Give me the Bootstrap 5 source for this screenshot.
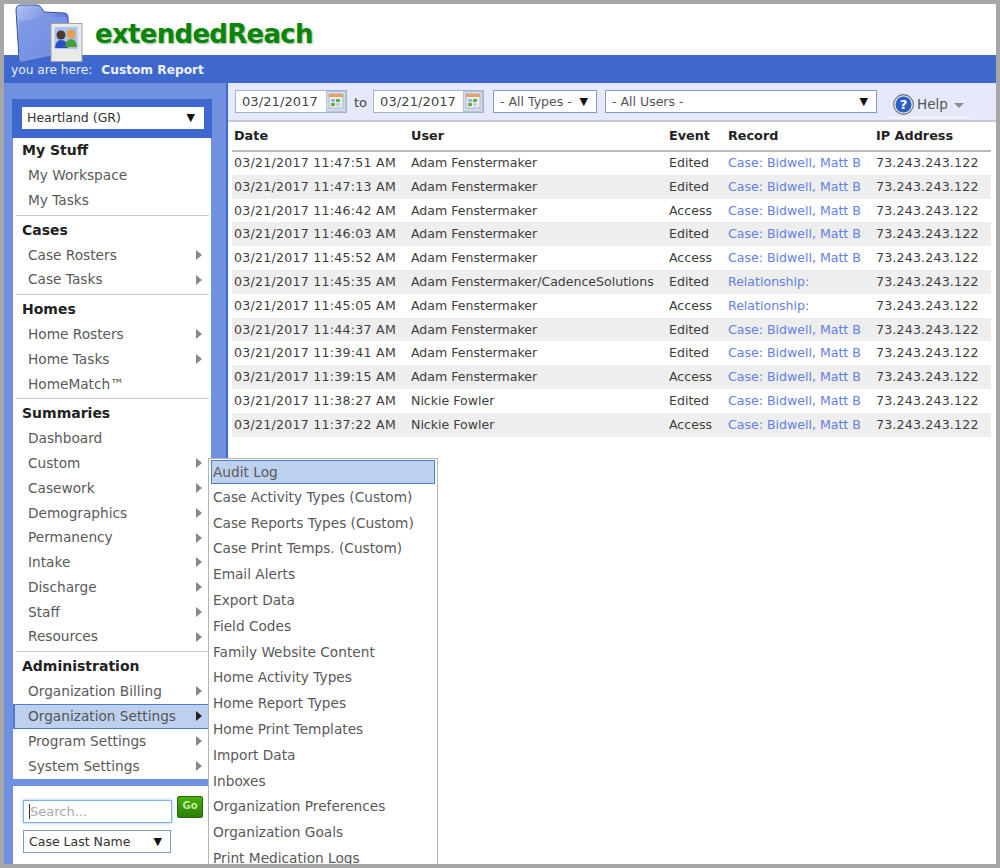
<!DOCTYPE html>
<html lang="en">
<head>
<meta charset="utf-8">
<title>extendedReach</title>
<link href="https://cdn.jsdelivr.net/npm/bootstrap@5.3.0/dist/css/bootstrap.min.css" rel="stylesheet">
<style>
html,body{height:868px;overflow:hidden;margin:0}
body{font-family:"DejaVu Sans","Liberation Sans",sans-serif;font-size:13px;color:#444;background:#fff}
.frame{position:relative;width:1000px;height:868px;border:4px solid #a6a6a6;overflow:hidden;background:#fff}
.top{height:51px;align-items:flex-start}
.logo-ic{position:absolute;left:10px;top:0;z-index:2}
.brand{margin:12px 0 0 91px;font-size:26px;line-height:36px;font-weight:700;color:#0a850a;text-shadow:1px 1px 2px rgba(20,100,20,.45);letter-spacing:-.7px}
.crumb{height:28px;background:#3e68cd;color:#e8eefc;padding-left:7px;line-height:31px;font-size:12.2px}
.crumb b{margin-left:5px;color:#eef3ff}
.shell{height:781px}
.side{width:222px;flex:none;background:#7091e0;padding:16px 0 0 8px}
.picker{width:200px;background:#3e68cd;height:39px;padding:8px 8px 0 10px}
.fakesel{background:#fff;border:1px solid #7f9dc0;display:flex;justify-content:space-between;align-items:center;color:#333;padding:1px 6px 0 5px}
.arrow{font-size:11px;color:#111}
.picker .fakesel{height:22px;border-color:#fff;font-size:12.5px;padding-left:4px;padding-right:8px}
.navbox{width:198px;margin-left:1px;background:#fff;padding:0 0 1px 0}
.navhd{font-weight:700;color:#222;font-size:14px;padding-left:9px;line-height:20px;height:25px;padding-top:2px}
.navit{display:flex;justify-content:space-between;align-items:center;height:24.75px;padding:0 9px 0 15px;color:#595959;font-size:13.7px}
.navit svg{flex:none}
.navit.on{background:#bdd0ee;border:1px solid #4f7dc9;border-left-width:2px;margin-right:-2px;padding-left:13px;padding-right:10px;color:#555;height:25px}
.rule{border-top:1px solid #c9c9c9;margin:2px 2px 2px 3px}
.band{width:200px;height:7px}
.searchbox{width:198px;margin-left:1px;background:#fff;height:78px;padding:14px 0 0 10px}
.srch{width:149px;height:23px;border:1px solid #7fb2e5;box-shadow:0 0 3px #8fbdf0;color:#aaa;padding:1px 0 0 5px;line-height:19px;font-size:13px}
.srch span{border-left:1px solid #333;padding-left:0}
.go{width:26px;height:22px;margin-left:5px;margin-top:-4px;background:linear-gradient(#46b20a,#2a7f06);border:1px solid #26660a;border-radius:2px;color:#c9e8a5;font-size:10px;font-weight:700;text-align:center;line-height:18px}
.searchbox .fakesel{width:148px;height:23px;margin-top:7px;font-size:12.5px;padding-right:8px}
.main{flex:1;border-left:2px solid #3e68cd;min-width:0}
.tools{height:39px;background:#e6e8fb;border-bottom:2px solid #c9c9d2;padding:7px 0 0 7px;font-size:13px}
.dt{width:112px;height:23px;background:#fff;border:1px solid #a3b4c8;display:flex;justify-content:space-between;align-items:center;padding:0 0 0 6px;color:#444;letter-spacing:.1px}
.to{margin:0 6px 0 7px;color:#444}
.dt2{width:111px}
.tp{width:104px;margin-left:9px;height:23px}
.us{width:272px;margin-left:8px;height:23px}
.tools .fakesel{border-color:#7f9dc0;font-size:12.5px;color:#555;padding:1px 8px 0 6px}
.help{margin-left:11px;width:82px;height:29px;border-bottom:1px solid #fff;font-size:13.5px;color:#555;gap:3px;margin-top:-1px;padding:3px 0 0 5px}
.caret-g{width:0;height:0;border:5px solid transparent;border-top-color:#8d8d8d;border-bottom:0;margin-left:3px;margin-top:2px}
.logtab{margin:0 0 0 4px;width:759px;border-collapse:collapse;font-size:12.55px;color:#3d3d3d;table-layout:fixed}
.logtab th{color:#222;font-weight:700;height:29px;border-bottom:2px solid #bbb;padding:0 0 0 2px;font-size:12.8px}
.logtab td{height:23.8px;padding:1px 0 0 2px;white-space:nowrap;overflow:visible}
.logtab td:first-child{letter-spacing:.27px}
.logtab td:last-child{letter-spacing:.2px}
.logtab tr.alt td{background:#eee}
.logtab a{color:#6380e2;text-decoration:none}
.fly{position:absolute;left:204px;top:454px;width:230px;height:420px;background:#fff;border:1px solid #b5b5b5;padding:1px 2px;font-size:13.7px;color:#595959}
.fly div{height:25.8px;line-height:25px;padding-left:2px;white-space:nowrap}
.fly div.sel{height:23.5px;line-height:22px;background:#bdd0ee;border:1px solid #4f7dc9;padding-left:1px;margin-bottom:1.4px}
</style>
</head>
<body>
<div class="frame">
  <div class="top d-flex">
    <svg class="logo-ic" width="72" height="60" viewBox="0 0 72 60">
      <defs><linearGradient id="f" x1="0" y1="0" x2="1" y2="1"><stop offset="0" stop-color="#b5c6f2"/><stop offset=".6" stop-color="#5a78d6"/><stop offset="1" stop-color="#3550b0"/></linearGradient></defs>
      <path d="M2 6 Q2 1 7 1 L23 1 Q26 1 28 5 L30 8 L50 9 Q54 9 54 14 L55 48 L8 58 Q5 58 5 54 Z" fill="url(#f)" stroke="#34509f"/>
      <path d="M5 17 Q18 16 28 12 L53 13 L55 48 L8 58 Q5 58 5 54 Z" fill="#7d97e6" opacity=".85"/>
      <rect x="37" y="19.5" width="31" height="38" fill="#e9e9e9" stroke="#a3a3a3"/>
      <rect x="40.5" y="23" width="23" height="22" fill="#a9c3ee"/>
      <circle cx="47" cy="31" r="4.5" fill="#4b3a2c"/><path d="M41 44 Q42 36 47 36 Q53 36 54 44Z" fill="#2c4fc0"/>
      <circle cx="57" cy="30" r="4.5" fill="#e3a24a"/><path d="M51 43 Q52 35 57 35 Q62 35 63 43Z" fill="#4f9d3a"/>
    </svg>
    <div class="brand">extendedReach</div>
  </div>
  <div class="crumb">you are here: <b>Custom Report</b></div>
  <div class="shell d-flex">
    <div class="side">
      <div class="picker"><div class="fakesel"><span>Heartland (GR)</span><span class="arrow">▼</span></div></div>
      <div class="navbox">
        <div class="navhd">My Stuff</div>
        <div class="navit"><span>My Workspace</span></div>
        <div class="navit"><span>My Tasks</span></div>
        <div class="rule"></div>
        <div class="navhd">Cases</div>
        <div class="navit"><span>Case Rosters</span><svg width="6" height="10"><path d="M0 0L6 5L0 10Z" fill="#888"/></svg></div>
        <div class="navit"><span>Case Tasks</span><svg width="6" height="10"><path d="M0 0L6 5L0 10Z" fill="#888"/></svg></div>
        <div class="rule"></div>
        <div class="navhd">Homes</div>
        <div class="navit"><span>Home Rosters</span><svg width="6" height="10"><path d="M0 0L6 5L0 10Z" fill="#888"/></svg></div>
        <div class="navit"><span>Home Tasks</span><svg width="6" height="10"><path d="M0 0L6 5L0 10Z" fill="#888"/></svg></div>
        <div class="navit"><span>HomeMatch™</span></div>
        <div class="rule"></div>
        <div class="navhd">Summaries</div>
        <div class="navit"><span>Dashboard</span></div>
        <div class="navit"><span>Custom</span><svg width="6" height="10"><path d="M0 0L6 5L0 10Z" fill="#888"/></svg></div>
        <div class="navit"><span>Casework</span><svg width="6" height="10"><path d="M0 0L6 5L0 10Z" fill="#888"/></svg></div>
        <div class="navit"><span>Demographics</span><svg width="6" height="10"><path d="M0 0L6 5L0 10Z" fill="#888"/></svg></div>
        <div class="navit"><span>Permanency</span><svg width="6" height="10"><path d="M0 0L6 5L0 10Z" fill="#888"/></svg></div>
        <div class="navit"><span>Intake</span><svg width="6" height="10"><path d="M0 0L6 5L0 10Z" fill="#888"/></svg></div>
        <div class="navit"><span>Discharge</span><svg width="6" height="10"><path d="M0 0L6 5L0 10Z" fill="#888"/></svg></div>
        <div class="navit"><span>Staff</span><svg width="6" height="10"><path d="M0 0L6 5L0 10Z" fill="#888"/></svg></div>
        <div class="navit"><span>Resources</span><svg width="6" height="10"><path d="M0 0L6 5L0 10Z" fill="#888"/></svg></div>
        <div class="rule"></div>
        <div class="navhd">Administration</div>
        <div class="navit"><span>Organization Billing</span><svg width="6" height="10"><path d="M0 0L6 5L0 10Z" fill="#888"/></svg></div>
        <div class="navit on"><span>Organization Settings</span><svg width="6" height="10"><path d="M0 0L6 5L0 10Z" fill="#222"/></svg></div>
        <div class="navit"><span>Program Settings</span><svg width="6" height="10"><path d="M0 0L6 5L0 10Z" fill="#888"/></svg></div>
        <div class="navit"><span>System Settings</span><svg width="6" height="10"><path d="M0 0L6 5L0 10Z" fill="#888"/></svg></div>
      </div>
      <div class="band"></div>
      <div class="searchbox">
        <div class="d-flex"><div class="srch"><span>Search...</span></div><div class="go">Go</div></div>
        <div class="fakesel"><span>Case Last Name</span><span class="arrow">▼</span></div>
      </div>
    </div>
    <div class="main">
      <div class="tools d-flex">
        <div class="dt"><span>03/21/2017</span><svg width="20" height="21" viewBox="0 0 20 21"><rect x=".5" y=".5" width="19" height="20" fill="#cfdcf0" stroke="#b7c4d8"/><rect x="3" y="3" width="14" height="14" fill="#eef1ea" stroke="#b5b5b5"/><rect x="3" y="3" width="14" height="3" fill="#e8a06a"/><rect x="5" y="8" width="4" height="3" fill="#9bb6d8"/><rect x="10" y="8" width="4" height="3" fill="#5fae5a"/><rect x="5" y="12" width="4" height="3" fill="#5fae5a"/><rect x="10" y="12" width="4" height="3" fill="#bcd0e5"/></svg></div>
        <span class="to lh-lg">to</span>
        <div class="dt dt2"><span>03/21/2017</span><svg width="20" height="21" viewBox="0 0 20 21"><rect x=".5" y=".5" width="19" height="20" fill="#cfdcf0" stroke="#b7c4d8"/><rect x="3" y="3" width="14" height="14" fill="#eef1ea" stroke="#b5b5b5"/><rect x="3" y="3" width="14" height="3" fill="#e8a06a"/><rect x="5" y="8" width="4" height="3" fill="#9bb6d8"/><rect x="10" y="8" width="4" height="3" fill="#5fae5a"/><rect x="5" y="12" width="4" height="3" fill="#5fae5a"/><rect x="10" y="12" width="4" height="3" fill="#bcd0e5"/></svg></div>
        <div class="fakesel tp"><span>- All Types -</span><span class="arrow">▼</span></div>
        <div class="fakesel us"><span>- All Users -</span><span class="arrow">▼</span></div>
        <div class="help d-flex align-items-center">
          <svg width="21" height="21" viewBox="0 0 20 20"><circle cx="10" cy="10" r="9.4" fill="#e2e6ef" stroke="#69717f"/><circle cx="10" cy="10" r="7.6" fill="#2b5fc2"/><text x="10" y="14.6" text-anchor="middle" fill="#fff" font-size="12.5" font-weight="700" font-family="DejaVu Sans">?</text></svg>
          <span>Help</span><span class="caret-g"></span>
        </div>
      </div>
      <table class="logtab">
        <colgroup><col style="width:177px"><col style="width:258px"><col style="width:59px"><col style="width:148px"><col></colgroup>
        <thead><tr><th>Date</th><th>User</th><th>Event</th><th>Record</th><th>IP Address</th></tr></thead>
        <tbody>
          <tr><td>03/21/2017 11:47:51 AM</td><td>Adam Fenstermaker</td><td>Edited</td><td><a href="#">Case: Bidwell, Matt B</a></td><td>73.243.243.122</td></tr>
          <tr class="alt"><td>03/21/2017 11:47:13 AM</td><td>Adam Fenstermaker</td><td>Edited</td><td><a href="#">Case: Bidwell, Matt B</a></td><td>73.243.243.122</td></tr>
          <tr><td>03/21/2017 11:46:42 AM</td><td>Adam Fenstermaker</td><td>Access</td><td><a href="#">Case: Bidwell, Matt B</a></td><td>73.243.243.122</td></tr>
          <tr class="alt"><td>03/21/2017 11:46:03 AM</td><td>Adam Fenstermaker</td><td>Edited</td><td><a href="#">Case: Bidwell, Matt B</a></td><td>73.243.243.122</td></tr>
          <tr><td>03/21/2017 11:45:52 AM</td><td>Adam Fenstermaker</td><td>Access</td><td><a href="#">Case: Bidwell, Matt B</a></td><td>73.243.243.122</td></tr>
          <tr class="alt"><td>03/21/2017 11:45:35 AM</td><td>Adam Fenstermaker/CadenceSolutions</td><td>Edited</td><td><a href="#">Relationship:</a></td><td>73.243.243.122</td></tr>
          <tr><td>03/21/2017 11:45:05 AM</td><td>Adam Fenstermaker</td><td>Access</td><td><a href="#">Relationship:</a></td><td>73.243.243.122</td></tr>
          <tr class="alt"><td>03/21/2017 11:44:37 AM</td><td>Adam Fenstermaker</td><td>Edited</td><td><a href="#">Case: Bidwell, Matt B</a></td><td>73.243.243.122</td></tr>
          <tr><td>03/21/2017 11:39:41 AM</td><td>Adam Fenstermaker</td><td>Edited</td><td><a href="#">Case: Bidwell, Matt B</a></td><td>73.243.243.122</td></tr>
          <tr class="alt"><td>03/21/2017 11:39:15 AM</td><td>Adam Fenstermaker</td><td>Access</td><td><a href="#">Case: Bidwell, Matt B</a></td><td>73.243.243.122</td></tr>
          <tr><td>03/21/2017 11:38:27 AM</td><td>Nickie Fowler</td><td>Edited</td><td><a href="#">Case: Bidwell, Matt B</a></td><td>73.243.243.122</td></tr>
          <tr class="alt"><td>03/21/2017 11:37:22 AM</td><td>Nickie Fowler</td><td>Access</td><td><a href="#">Case: Bidwell, Matt B</a></td><td>73.243.243.122</td></tr>
        </tbody>
      </table>
    </div>
  </div>
  <div class="fly">
    <div class="sel">Audit Log</div>
    <div>Case Activity Types (Custom)</div>
    <div>Case Reports Types (Custom)</div>
    <div>Case Print Temps. (Custom)</div>
    <div>Email Alerts</div>
    <div>Export Data</div>
    <div>Field Codes</div>
    <div>Family Website Content</div>
    <div>Home Activity Types</div>
    <div>Home Report Types</div>
    <div>Home Print Templates</div>
    <div>Import Data</div>
    <div>Inboxes</div>
    <div>Organization Preferences</div>
    <div>Organization Goals</div>
    <div>Print Medication Logs</div>
  </div>
</div>
<script src="https://cdn.jsdelivr.net/npm/bootstrap@5.3.0/dist/js/bootstrap.bundle.min.js"></script>
</body>
</html>
